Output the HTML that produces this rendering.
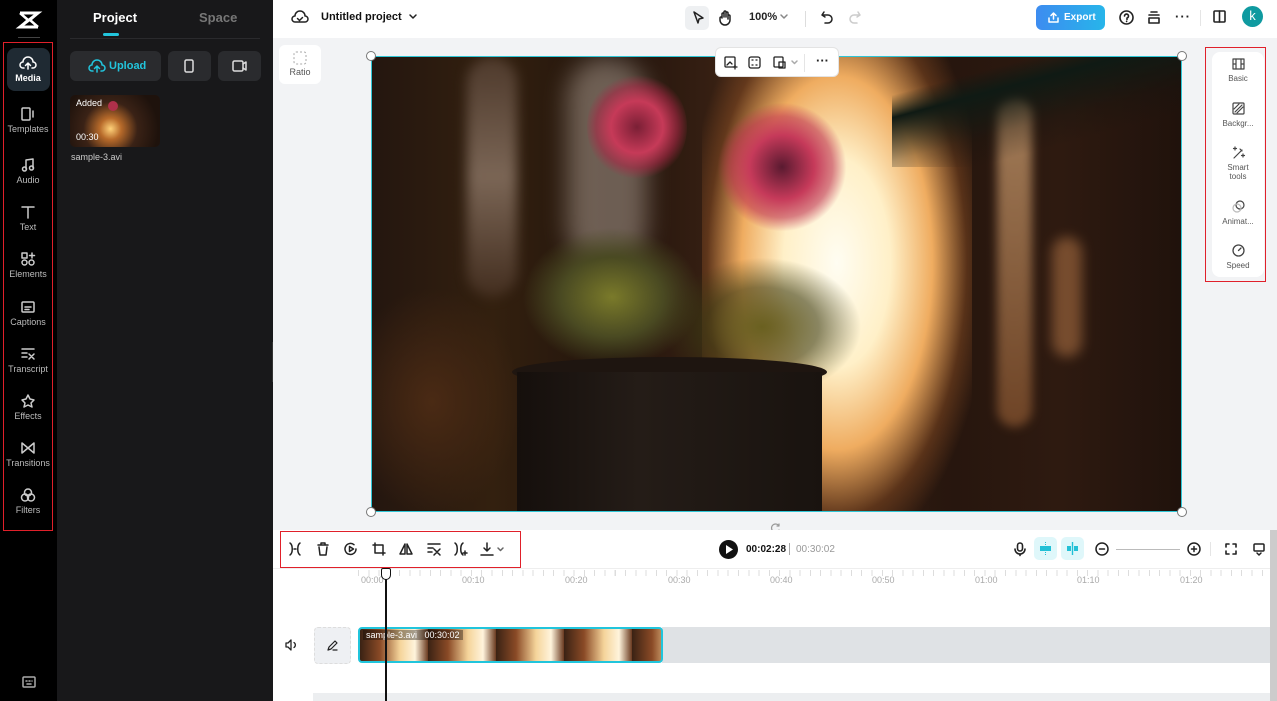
<!DOCTYPE html>
<html><head><meta charset="utf-8"><style>
*{box-sizing:border-box;margin:0;padding:0}
body{width:1277px;height:701px;overflow:hidden;font-family:"Liberation Sans",sans-serif;background:#fff;position:relative}
.abs{position:absolute}
.rail{left:0;top:0;width:57px;height:701px;background:#000}
.ri{position:absolute;left:5px;width:46px;text-align:center;color:#bbb;font-size:9px}
.ri svg{display:block;margin:0 auto 3px}
.panel{left:57px;top:0;width:216px;height:701px;background:#18181a}
.top{left:273px;top:0;width:1004px;height:38px;background:#fff}
.canvas{left:273px;top:38px;width:1004px;height:492px;background:#f2f3f5}
.tl{left:273px;top:530px;width:1004px;height:171px;background:#fff}
svg{overflow:visible}
.ic{stroke:#222;fill:none;stroke-width:1.5;stroke-linecap:round;stroke-linejoin:round}
.rp{position:absolute;left:0;width:52px;text-align:center;font-size:8px;color:#555}
.rp svg{display:block;margin:0 auto 4px}
.lbl{position:absolute;top:575px;font-size:9px;color:#aaa}
</style></head><body>
<div class="abs rail">
 <svg class="abs" style="left:18px;top:10px" width="22" height="20" viewBox="0 0 22 20"><path d="M2 3h18L2 17h18" stroke="#fff" stroke-width="3" fill="none"/><path d="M2 3l8 7M20 3l-8 7M2 17l8-7M20 17l-8-7" stroke="#fff" stroke-width="2.5"/></svg>
 <div class="abs" style="left:18px;top:37px;width:22px;height:1px;background:#444"></div>
 <div class="abs" style="left:3px;top:42px;width:50px;height:489px;border:1.5px solid #e0202a"></div>
 <div class="abs" style="left:7px;top:48px;width:43px;height:43px;border-radius:8px;background:#1f2a33"></div>
 <div class="ri" style="top:56px;color:#fff;font-weight:bold"><svg width="16" height="14" class="ic" style="stroke:#fff"><path d="M4 12H3a3 3 0 0 1 0-6 5 5 0 0 1 10 0 3 3 0 0 1 0 6h-1M8 13V7M5.5 9.5 8 7l2.5 2.5"/></svg>Media</div>
 <div class="ri" style="top:107px"><svg width="16" height="14" class="ic" style="stroke:#ccc"><rect x="2" y="1" width="8" height="12" rx="1"/><path d="M13 4v6"/></svg>Templates</div>
 <div class="ri" style="top:158px"><svg width="16" height="14" class="ic" style="stroke:#ccc"><path d="M6 11V2l7-1v9"/><circle cx="4.5" cy="11" r="2"/><circle cx="11.5" cy="10" r="2"/></svg>Audio</div>
 <div class="ri" style="top:205px"><svg width="16" height="14" class="ic" style="stroke:#ccc"><path d="M2 2h12M8 2v11"/></svg>Text</div>
 <div class="ri" style="top:252px"><svg width="16" height="14" class="ic" style="stroke:#ccc"><rect x="2" y="1" width="5" height="5"/><path d="M12 1v5M9.5 3.5h5"/><circle cx="4.5" cy="10.5" r="2.5"/><circle cx="11.5" cy="10.5" r="2.5"/></svg>Elements</div>
 <div class="ri" style="top:300px"><svg width="16" height="14" class="ic" style="stroke:#ccc"><rect x="2" y="2" width="12" height="10" rx="1"/><path d="M5 7h6M5 9.5h4"/></svg>Captions</div>
 <div class="ri" style="top:347px"><svg width="16" height="14" class="ic" style="stroke:#ccc"><path d="M2 2h12M2 6h5M2 10h5M9 7l5 5M14 7l-5 5"/></svg>Transcript</div>
 <div class="ri" style="top:394px"><svg width="16" height="14" class="ic" style="stroke:#ccc"><path d="M8 1l2 4 4 1-3 3 1 4-4-2-4 2 1-4-3-3 4-1z"/></svg>Effects</div>
 <div class="ri" style="top:441px"><svg width="16" height="14" class="ic" style="stroke:#ccc"><path d="M2 2v10l12-10v10z"/></svg>Transitions</div>
 <div class="ri" style="top:488px"><svg width="16" height="14" class="ic" style="stroke:#ccc"><circle cx="8" cy="4.5" r="3.5"/><circle cx="5" cy="9.5" r="3.5"/><circle cx="11" cy="9.5" r="3.5"/></svg>Filters</div>
 <svg class="abs ic" style="left:22px;top:676px;stroke:#aaa" width="14" height="12"><rect x="1" y="1" width="12" height="10" rx="1"/><path d="M4 5h1M7 5h1M10 5h0M5 8h4"/></svg>
</div>
<div class="abs panel">
 <div class="abs" style="left:36px;top:10px;color:#fff;font-weight:bold;font-size:13px">Project</div>
 <div class="abs" style="left:142px;top:10px;color:#777;font-weight:bold;font-size:13px">Space</div>
 <div class="abs" style="left:46px;top:33px;width:16px;height:3px;border-radius:2px;background:#22c5dd"></div>
 <div class="abs" style="left:13px;top:38px;width:190px;height:1px;background:#2a2a2d"></div>
 <div class="abs" style="left:13px;top:51px;width:91px;height:30px;border-radius:6px;background:#2a2b2e;color:#22c5dd;font-weight:bold;font-size:11px;line-height:30px;padding-left:39px">Upload
  <svg class="abs ic" style="left:19px;top:8px;stroke:#22c5dd" width="16" height="14"><path d="M4 12H3a3 3 0 0 1 0-6 5 5 0 0 1 10 0 3 3 0 0 1 0 6h-1M8 13V7M5.5 9.5 8 7l2.5 2.5"/></svg></div>
 <div class="abs" style="left:111px;top:51px;width:43px;height:30px;border-radius:6px;background:#2a2b2e"><svg class="abs ic" style="left:16px;top:8px;stroke:#ddd" width="10" height="14"><rect x="1" y="1" width="8" height="12" rx="1.5"/></svg></div>
 <div class="abs" style="left:161px;top:51px;width:43px;height:30px;border-radius:6px;background:#2a2b2e"><svg class="abs ic" style="left:14px;top:9px;stroke:#ddd" width="16" height="12"><rect x="1" y="1" width="10" height="10" rx="1.5"/><path d="M11 4l3-2v8l-3-2"/></svg></div>
 <div class="abs" style="left:13px;top:95px;width:90px;height:52px;border-radius:5px;background:radial-gradient(circle at 45% 65%,#ffd27a 0,#b76a2a 18%,#3a2216 45%,#1e120c 80%);overflow:hidden">
  <div class="abs" style="left:38px;top:6px;width:10px;height:10px;border-radius:50%;background:#b0304a"></div>
  <div class="abs" style="left:6px;top:3px;color:#fff;font-size:9px">Added</div>
  <div class="abs" style="left:6px;top:37px;color:#fff;font-size:9px">00:30</div>
 </div>
 <div class="abs" style="left:14px;top:152px;color:#ccc;font-size:9px">sample-3.avi</div>
 <div class="abs" style="left:215px;top:342px;width:7px;height:40px;border-radius:0 6px 6px 0;background:#333"></div>
</div>
<div class="abs top">
 <svg class="abs ic" style="left:19px;top:10px" width="16" height="14"><path d="M4 12H3a3 3 0 0 1 0-6 5 5 0 0 1 10 0 3 3 0 0 1 0 6H4M5.5 8.5l2 2 3-3"/></svg>
 <div class="abs" style="left:48px;top:11px;font-size:11px;font-weight:bold;color:#111">Untitled project</div>
 <svg class="abs ic" style="left:136px;top:14px" width="8" height="6"><path d="M1 1l3 3 3-3"/></svg>
 <div class="abs" style="left:412px;top:6px;width:24px;height:24px;border-radius:5px;background:#eef0f2"></div>
 <svg class="abs ic" style="left:419px;top:11px" width="12" height="14"><path d="M2 1l9 6-4 1-1 4z"/></svg>
 <svg class="abs ic" style="left:445px;top:10px" width="14" height="16"><path d="M4 8V4a1 1 0 0 1 2 0v3V2a1 1 0 0 1 2 0v5V3a1 1 0 0 1 2 0v5 1-3a1 1 0 0 1 2 0v4a5 5 0 0 1-10 0V8a1 1 0 0 1 2 0"/></svg>
 <div class="abs" style="left:476px;top:11px;font-size:11px;font-weight:bold;color:#222">100%</div>
 <svg class="abs ic" style="left:507px;top:14px;stroke:#888" width="8" height="6"><path d="M1 1l3 3 3-3"/></svg>
 <div class="abs" style="left:532px;top:11px;width:1px;height:16px;background:#ddd"></div>
 <svg class="abs ic" style="left:548px;top:11px" width="12" height="12"><path d="M3 1L1 4l3 2M1 4h6a4 4 0 0 1 0 8H4"/></svg>
 <svg class="abs ic" style="left:576px;top:11px;stroke:#ccc" width="12" height="12"><path d="M9 1l2 3-3 2M11 4H5a4 4 0 0 0 0 8h3"/></svg>
 <div class="abs" style="left:763px;top:5px;width:69px;height:25px;border-radius:6px;background:linear-gradient(90deg,#3d8cf0,#27b5ea);color:#fff;font-weight:bold;font-size:10px;line-height:25px;padding-left:28px">Export
  <svg class="abs ic" style="left:12px;top:7px;stroke:#fff" width="11" height="11"><path d="M5.5 7V1M3 3.5 5.5 1 8 3.5M1 6v4h9V6"/></svg></div>
 <svg class="abs ic" style="left:846px;top:10px;stroke-width:1.6" width="15" height="15"><circle cx="7.5" cy="7.5" r="6.5"/><path d="M5.5 6a2 2 0 1 1 2.5 2v1.5M7.6 11.3v.2"/></svg>
 <svg class="abs ic" style="left:875px;top:11px;stroke-width:1.6" width="12" height="13"><path d="M3 1h6M1 4h10M1 7h10v5H1z"/></svg>
 <div class="abs" style="left:902px;top:9px;font-size:13px;font-weight:bold;color:#222;letter-spacing:1px">···</div>
 <div class="abs" style="left:927px;top:10px;width:1px;height:16px;background:#e5e5e5"></div>
 <svg class="abs ic" style="left:940px;top:10px;stroke-width:1.6" width="13" height="13"><rect x="1" y="1" width="11" height="11" rx="1"/><path d="M6.5 1v11"/></svg>
 <div class="abs" style="left:969px;top:6px;width:21px;height:21px;border-radius:50%;background:#0f9aa0;color:#fff;font-size:13px;text-align:center;line-height:20px">k</div>
</div>
<div class="abs canvas">
 <div class="abs" style="left:6px;top:7px;width:42px;height:39px;border-radius:6px;background:#fff;font-size:9px;color:#555;text-align:center;padding-top:22px">Ratio
  <svg class="abs" style="left:14px;top:6px" width="14" height="14"><rect x="1" y="1" width="12" height="12" rx="2" fill="none" stroke="#aaa" stroke-dasharray="2 2"/></svg></div>
 <div class="abs" style="left:932px;top:9px;width:61px;height:235px;border:1.5px solid #e0202a"></div>
 <div class="abs" style="left:939px;top:14px;width:52px;height:225px;border-radius:8px;background:#fff">
  <div class="rp" style="top:6px"><svg class="ic" width="13" height="12" style="stroke:#444;stroke-width:1.2"><rect x="1" y="1" width="11" height="10"/><path d="M4 1v10M9 1v10M1 6h3M9 6h3"/></svg>Basic</div>
  <div class="rp" style="top:50px"><svg class="ic" width="13" height="13" style="stroke:#444;stroke-width:1.2"><rect x="1" y="1" width="11" height="11" rx="1"/><path d="M3 10l7-7M5 11l6-6M2 7l5-5"/></svg>Backgr...</div>
  <div class="rp" style="top:94px"><svg class="ic" width="13" height="13" style="stroke:#444;stroke-width:1.2"><path d="M2 12l8-8M8 3l2 2M3 1v3M1.5 2.5h3M11 8v3M9.5 9.5h3"/></svg>Smart<br>tools</div>
  <div class="rp" style="top:148px"><svg class="ic" width="13" height="13" style="stroke:#444;stroke-width:1.2"><circle cx="8" cy="5" r="4"/><circle cx="5" cy="8" r="4" style="stroke:#bbb"/></svg>Animat...</div>
  <div class="rp" style="top:192px"><svg class="ic" width="13" height="13" style="stroke:#444;stroke-width:1.3"><circle cx="6.5" cy="6.5" r="5.5"/><path d="M6.5 6.5l2.5-2.5"/></svg>Speed</div>
 </div>
</div>
<!-- video -->
<div class="abs" style="left:371px;top:56px;width:811px;height:456px;overflow:hidden;border:1px solid #2fc6d6;background:linear-gradient(90deg,#24160f 0%,#33200f 15%,#22140c 30%,#3b2214 45%,#27160e 72%,#2e1a10 85%,#20120c 100%)">
 <div class="abs" style="left:330px;top:-10px;width:270px;height:480px;background:radial-gradient(ellipse at 50% 45%,#fffdf2 0%,#fff0c8 28%,#efac60 50%,rgba(160,90,40,.4) 68%,rgba(60,30,20,0) 80%)"></div>
 <div class="abs" style="left:95px;top:0;width:50px;height:240px;border-radius:30px;background:linear-gradient(#5a4538,#9a8474,#4a3426);filter:blur(6px);opacity:.7"></div>
 <div class="abs" style="left:195px;top:0;width:80px;height:210px;border-radius:40px;background:#c8b8aa;filter:blur(12px);opacity:.45"></div>
 <div class="abs" style="left:625px;top:40px;width:35px;height:330px;border-radius:20px;background:linear-gradient(#d6a879,#8a5630);filter:blur(5px);opacity:.7"></div>
 <div class="abs" style="left:680px;top:180px;width:30px;height:120px;border-radius:18px;background:#a86e42;filter:blur(6px);opacity:.6"></div>
 <div class="abs" style="left:520px;top:0;width:300px;height:110px;background:linear-gradient(165deg,rgba(10,22,16,0) 20%,#0f1a14 32%,rgba(20,20,15,.3) 55%,rgba(20,20,15,0) 70%)"></div>
 <div class="abs" style="left:150px;top:170px;width:180px;height:140px;border-radius:50%;background:radial-gradient(ellipse,#7a7a2a 0%,#4a4a22 40%,rgba(50,50,20,0) 70%)"></div>
 <div class="abs" style="left:290px;top:200px;width:200px;height:140px;border-radius:50%;background:radial-gradient(ellipse,#6a6020 0%,rgba(60,60,20,.6) 40%,rgba(50,50,20,0) 70%)"></div>
 <div class="abs" style="left:215px;top:15px;width:100px;height:110px;border-radius:50%;background:radial-gradient(circle,#7a1f35 0%,#c63a58 35%,rgba(170,40,70,.6) 55%,rgba(0,0,0,0) 70%)"></div>
 <div class="abs" style="left:345px;top:45px;width:130px;height:130px;border-radius:50%;background:radial-gradient(circle,#5a1a30 0%,#c63a5a 35%,rgba(190,50,80,.6) 55%,rgba(0,0,0,0) 70%)"></div>
 <div class="abs" style="left:140px;top:300px;width:315px;height:30px;border-radius:50%;background:#1e1510"></div>
 <div class="abs" style="left:145px;top:315px;width:305px;height:160px;border-radius:0 0 10px 10px;background:linear-gradient(90deg,#150f0c,#241c17 40%,#19130f)"></div>
 <div class="abs" style="left:0;top:230px;width:150px;height:230px;background:radial-gradient(ellipse at 40% 50%,#4a2a14,rgba(30,18,10,0) 70%)"></div>
</div>
<!-- handles -->
<div class="abs" style="left:366px;top:51px;width:10px;height:10px;border-radius:50%;background:#fff;border:1px solid #777"></div>
<div class="abs" style="left:1177px;top:51px;width:10px;height:10px;border-radius:50%;background:#fff;border:1px solid #777"></div>
<div class="abs" style="left:366px;top:507px;width:10px;height:10px;border-radius:50%;background:#fff;border:1px solid #777"></div>
<div class="abs" style="left:1177px;top:507px;width:10px;height:10px;border-radius:50%;background:#fff;border:1px solid #777"></div>
<div class="abs" style="left:715px;top:47px;width:124px;height:30px;border-radius:6px;background:#fff;border:1px solid #e3e3e3">
 <svg class="abs ic" style="left:8px;top:8px;stroke-width:1.3" width="14" height="14"><rect x="1" y="1" width="10" height="10" rx="1"/><path d="M11 9v4M9 11h4M3 9l3-3 2 2"/></svg>
 <svg class="abs ic" style="left:32px;top:8px;stroke-width:1.3" width="13" height="13"><rect x="1" y="1" width="11" height="11" rx="2"/><path d="M4 4h1M8 4h1M4 9h1M8 9h1"/></svg>
 <svg class="abs ic" style="left:57px;top:8px;stroke-width:1.3" width="14" height="13"><rect x="1" y="1" width="9" height="10" rx="1"/><rect x="6" y="6" width="6" height="6"/></svg>
 <svg class="abs ic" style="left:75px;top:12px;stroke:#aaa" width="7" height="5"><path d="M1 1l2.5 2.5L6 1"/></svg>
 <div class="abs" style="left:88px;top:6px;width:1px;height:18px;background:#e5e5e5"></div>
 <div class="abs" style="left:100px;top:5px;font-size:13px;font-weight:bold;color:#222">···</div>
</div>
<svg class="abs ic" style="left:771px;top:523px;stroke:#999;stroke-width:1.2" width="10" height="10"><path d="M8 3a4 4 0 1 0 0 4M8 1v2H6"/></svg>
<!-- timeline -->
<div class="abs tl">
 <div class="abs" style="left:7px;top:1px;width:241px;height:37px;border:1.5px solid #e0202a"></div>
 <svg class="abs ic" style="left:16px;top:12px" width="12" height="14"><path d="M1 1c3 2 3 10 0 12M11 1c-3 2-3 10 0 12M5 7h2"/></svg>
 <svg class="abs ic" style="left:44px;top:12px" width="12" height="14"><path d="M1 3h10M4 3V1h4v2M2 5l1 8h6l1-8"/></svg>
 <svg class="abs ic" style="left:71px;top:12px" width="14" height="14"><path d="M12 7a5.5 5.5 0 1 1-2-4.3"/><path d="M5.5 4.5v5l4-2.5z"/></svg>
 <svg class="abs ic" style="left:99px;top:12px" width="14" height="14"><path d="M3 1v10h10M1 3h10v10"/></svg>
 <svg class="abs ic" style="left:126px;top:12px" width="14" height="14"><path d="M6 2L1 12h5zM8 2l5 10H8z"/></svg>
 <svg class="abs ic" style="left:154px;top:12px" width="14" height="14"><path d="M1 2h12M1 6h5M1 10h4M7 7l6 6M13 7l-6 6"/></svg>
 <svg class="abs ic" style="left:181px;top:12px" width="14" height="14"><path d="M1 1c3 2 3 10 0 12M9 1c-3 2-3 10 0 12M11 9v4M9 11h4"/></svg>
 <svg class="abs ic" style="left:207px;top:12px" width="14" height="14"><path d="M7 1v8M4 6l3 3 3-3M1 13h12"/></svg>
 <svg class="abs ic" style="left:224px;top:17px;stroke:#666" width="7" height="5"><path d="M1 1l2.5 2.5L6 1"/></svg>
 <div class="abs" style="left:446px;top:10px;width:19px;height:19px;border-radius:50%;background:#111"></div>
 <svg class="abs" style="left:453px;top:15px" width="7" height="9"><path d="M0 0l7 4.5L0 9z" fill="#fff"/></svg>
 <div class="abs" style="left:473px;top:14px;font-size:10px;font-weight:bold;color:#111">00:02:28</div>
 <div class="abs" style="left:516px;top:13px;width:1px;height:12px;background:#aaa"></div>
 <div class="abs" style="left:523px;top:14px;font-size:10px;color:#999">00:30:02</div>
 <svg class="abs ic" style="left:741px;top:12px;stroke-width:1.6" width="12" height="14"><rect x="3.5" y="1" width="5" height="8" rx="2.5"/><path d="M1 7a5 5 0 0 0 10 0M6 12v1.5"/></svg>
 <div class="abs" style="left:761px;top:7px;width:23px;height:23px;border-radius:5px;background:#dff7fa"></div>
 <svg class="abs" style="left:766px;top:12px" width="13" height="13"><rect x="1" y="4" width="11" height="5" fill="#22c0d6"/><path d="M6.5 0v3M6.5 10v3" stroke="#22c0d6" stroke-dasharray="1 1"/></svg>
 <div class="abs" style="left:788px;top:7px;width:23px;height:23px;border-radius:5px;background:#dff7fa"></div>
 <svg class="abs" style="left:793px;top:12px" width="13" height="13"><rect x="1" y="4" width="4" height="5" fill="#22c0d6"/><rect x="8" y="4" width="4" height="5" fill="#22c0d6"/><path d="M6.5 0v13" stroke="#22c0d6" stroke-width="1.4"/></svg>
 <svg class="abs ic" style="left:822px;top:12px;stroke-width:1.5" width="14" height="14"><circle cx="7" cy="7" r="6"/><path d="M4.5 7h5"/></svg>
 <div class="abs" style="left:843px;top:19px;width:64px;height:1px;background:#bbb"></div>
 <svg class="abs ic" style="left:914px;top:12px;stroke-width:1.5" width="14" height="14"><circle cx="7" cy="7" r="6"/><path d="M4.5 7h5M7 4.5v5"/></svg>
 <div class="abs" style="left:937px;top:12px;width:1px;height:14px;background:#e5e5e5"></div>
 <svg class="abs ic" style="left:952px;top:13px;stroke-width:1.6" width="12" height="12"><path d="M1 4V1h3M8 1h3v3M11 8v3H8M4 11H1V8"/></svg>
 <svg class="abs ic" style="left:980px;top:13px;stroke-width:1.5" width="12" height="13"><rect x="1" y="1" width="10" height="7" rx="1"/><path d="M4 10l2 2 2-2"/></svg>
 <div class="abs" style="left:0;top:38px;width:1004px;height:1px;background:#eee"></div>
 <div class="abs" style="left:997px;top:0;width:7px;height:171px;background:#ccc"></div>
 <div class="abs" style="left:40px;top:163px;width:957px;height:8px;background:#eceef0"></div>
</div>
<div class="lbl" style="left:361px">00:00</div><div class="lbl" style="left:462px">00:10</div><div class="lbl" style="left:565px">00:20</div><div class="lbl" style="left:668px">00:30</div><div class="lbl" style="left:770px">00:40</div><div class="lbl" style="left:872px">00:50</div><div class="lbl" style="left:975px">01:00</div><div class="lbl" style="left:1077px">01:10</div><div class="lbl" style="left:1180px">01:20</div>
<div class="abs" style="left:358px;top:570px;width:912px;height:6px;background:repeating-linear-gradient(90deg,#ddd 0 1px,transparent 1px 10.27px)"></div>
<svg class="abs ic" style="left:285px;top:639px;stroke-width:1.3" width="13" height="12"><path d="M1 4h2l3-3v10L3 8H1zM9 3.5a3 3 0 0 1 0 5"/></svg>
<div class="abs" style="left:314px;top:627px;width:37px;height:37px;border-radius:4px;background:#eef0f3;border:1px dashed #ddd"></div>
<svg class="abs ic" style="left:327px;top:640px;stroke-width:1.2" width="11" height="11"><path d="M1 10l1-3 6-6 2 2-6 6zM6 10h4"/></svg>
<div class="abs" style="left:662px;top:627px;width:608px;height:36px;background:#dfe2e5"></div>
<div class="abs" style="left:358px;top:627px;width:305px;height:36px;border:2px solid #21c5dc;border-radius:4px;overflow:hidden;background:repeating-linear-gradient(90deg,#3a2214 0,#8a4a26 20px,#f5d49a 40px,#fff4dc 55px,#6a3a20 68px)">
 <div class="abs" style="left:3px;top:1px;font-size:9px;color:#fff;background:rgba(0,0,0,.35);padding:0 3px">sample-3.avi&nbsp;&nbsp;&nbsp;00:30:02</div>
</div>
<div class="abs" style="left:385px;top:572px;width:2px;height:129px;background:#111"></div>
<div class="abs" style="left:381px;top:568px;width:10px;height:12px;border:1.5px solid #111;border-radius:2px 2px 5px 5px;background:#fff"></div>
</body></html>
